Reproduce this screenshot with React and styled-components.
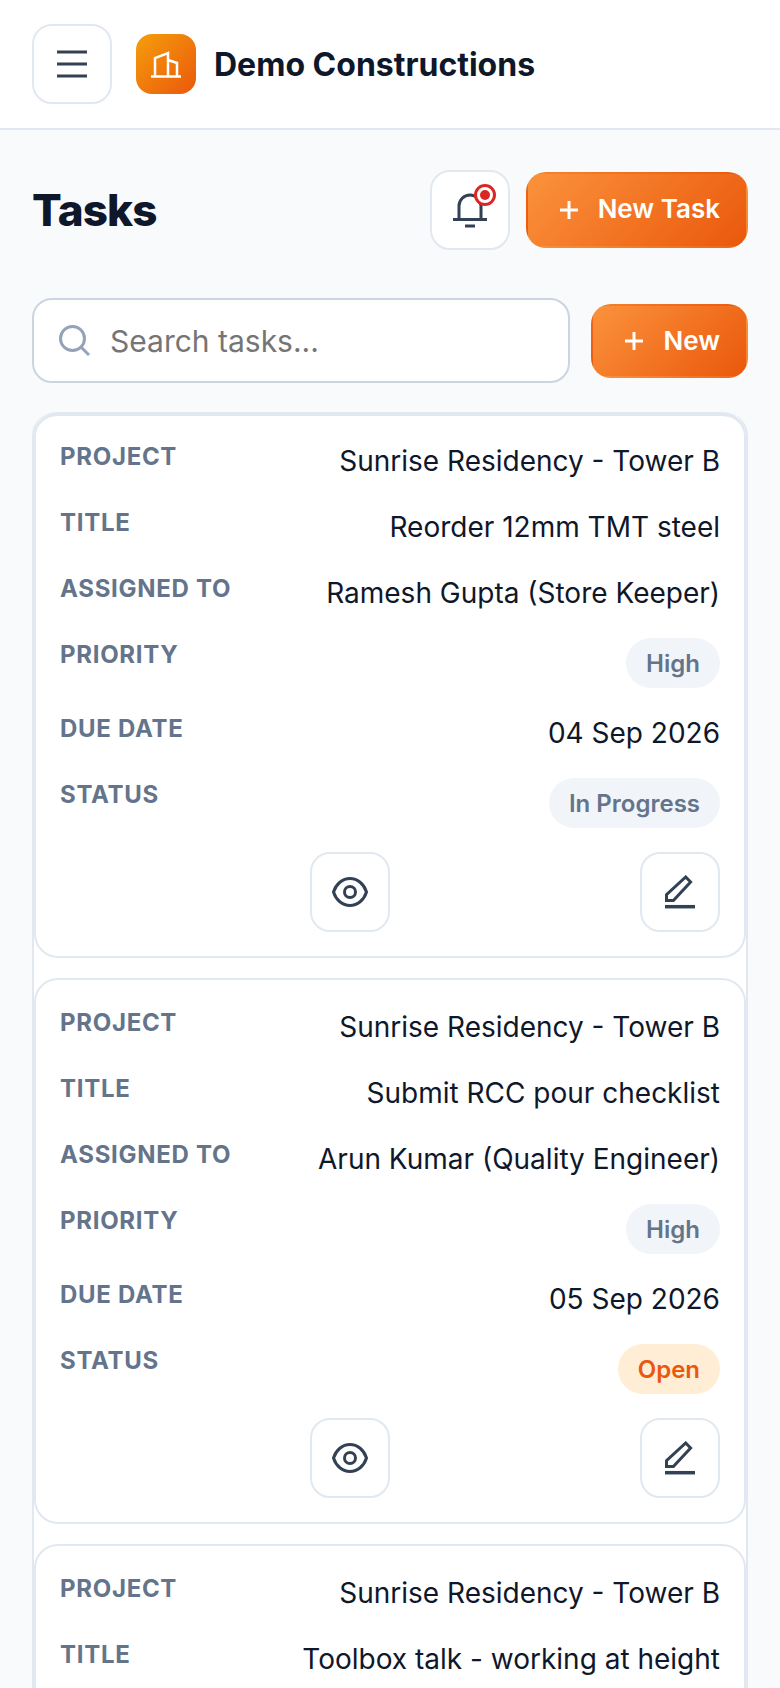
import React from 'react';
import styled, { createGlobalStyle } from 'styled-components';

const GlobalStyle = createGlobalStyle`
  html, body {
    margin: 0;
    height: 1688px;
    overflow: hidden;
    background: #f8fafc;
    font-family: Inter, "Liberation Sans", sans-serif;
    color: #0f172a;
  }
  * { box-sizing: border-box; }
`;

const Header = styled.header`
  display: flex;
  align-items: center;
  height: 130px;
  padding: 0 32px;
  background: #fff;
  border-bottom: 2px solid #e2e8f0;
`;

const MenuButton = styled.button`
  display: flex;
  align-items: center;
  justify-content: center;
  flex: none;
  width: 80px;
  height: 80px;
  padding: 0;
  background: #fff;
  border: 2px solid #e2e8f0;
  border-radius: 20px;
`;

const Logo = styled.div`
  display: flex;
  align-items: center;
  justify-content: center;
  flex: none;
  width: 60px;
  height: 60px;
  margin-left: 24px;
  border-radius: 16px;
  background: linear-gradient(135deg, #f59e0b, #ea580c);
`;

const Brand = styled.div`
  margin-left: 18px;
  font-size: 32px;
  font-weight: 700;
`;

const Main = styled.main`
  padding: 40px 32px 0;
`;

const TitleRow = styled.div`
  display: flex;
  align-items: center;
  justify-content: space-between;
  height: 80px;
`;

const Title = styled.h1`
  margin: 0;
  font-size: 44px;
  font-weight: 800;
  letter-spacing: -0.88px;
`;

const TitleActions = styled.div`
  display: flex;
  align-items: center;
  gap: 16px;
`;

const IconButton = styled.button`
  position: relative;
  display: flex;
  align-items: center;
  justify-content: center;
  flex: none;
  width: 80px;
  height: 80px;
  padding: 0;
  background: #fff;
  border: 2px solid #e2e8f0;
  border-radius: 20px;
`;

const Badge = styled.span`
  position: absolute;
  top: 12px;
  left: 42px;
  display: flex;
  align-items: center;
  justify-content: center;
  width: 22px;
  height: 22px;
  background: #fff;
  border: 3px solid #dc2626;
  border-radius: 50%;

  &::after {
    content: '';
    width: 10px;
    height: 10px;
    background: #dc2626;
    border-radius: 50%;
  }
`;

// transparent border: the gradient repeats under it, dark on the left, light on the right
const PrimaryButton = styled.button`
  display: flex;
  align-items: center;
  flex: none;
  gap: 20px;
  height: ${(p) => p.$height}px;
  padding: 0 26px 0 32px;
  color: #fff;
  font-family: inherit;
  font-size: 26px;
  font-weight: 600;
  background: linear-gradient(135deg, #fb923c, #ea580c);
  border: 2px solid transparent;
  border-radius: 20px;
`;

const ButtonText = styled.span`
  margin-bottom: ${(p) => (p.$raised ? '3px' : '0')};
`;

const SearchRow = styled.div`
  display: flex;
  align-items: center;
  gap: 21px;
  margin-top: 48px;
`;

const SearchBox = styled.label`
  display: flex;
  flex: 1;
  align-items: center;
  gap: 20px;
  min-width: 0;
  height: 85px;
  padding: 0 24px 0 25px;
  background: #fff;
  border: 2px solid #cbd5e1;
  border-radius: 20px;
`;

const SearchInput = styled.input`
  flex: 1;
  min-width: 0;
  padding: 0;
  border: 0;
  outline: 0;
  font-family: inherit;
  font-size: 30px;
  color: #0f172a;
  background: transparent;
`;

const List = styled.div`
  display: flex;
  flex-direction: column;
  gap: 20px;
  margin-top: 29px;
  background: #fff;
  border: 2px solid #e2e8f0;
  border-top: 0;
  border-radius: 24px;
`;

const Card = styled.article`
  display: flex;
  flex-direction: column;
  gap: 24px;
  min-height: 546px;
  padding: 26px 24px 24px;
  background: #fff;
  border: 2px solid #e2e8f0;
  border-radius: 24px;

  &:first-child {
    padding-top: 24px;
    border-top-width: 4px;
  }
`;

const Row = styled.div`
  display: flex;
  align-items: flex-start;
  justify-content: space-between;
  min-height: 42px;
`;

const Label = styled.span`
  font-size: 24px;
  font-weight: 700;
  line-height: 34px;
  letter-spacing: 0.7px;
  color: #64748b;
`;

const Value = styled.span`
  font-size: 28px;
  line-height: 42px;
`;

const Pill = styled.span`
  height: 50px;
  padding: 0 20px;
  border-radius: 25px;
  font-size: 24px;
  font-weight: 600;
  line-height: 52px;
  color: ${(p) => (p.$open ? '#ea580c' : '#64748b')};
  background: ${(p) => (p.$open ? '#ffedd5' : '#f1f5f9')};
`;

const Actions = styled.div`
  display: flex;
  justify-content: flex-end;
  gap: 250px;
`;

const MenuIcon = () => (
  <svg width="30" height="28" viewBox="0 0 30 28" fill="none" stroke="#334155" strokeWidth="3">
    <path d="M0 2h30M0 14h30M0 26h30" />
  </svg>
);

const BuildingIcon = () => (
  <svg width="30" height="28" viewBox="0 0 30 28" fill="none" stroke="#fff" strokeWidth="2.500">
    <path d="M0 26.500h30M4 26.500V8L17 3v23.500M17 10l9 3v13.500" />
  </svg>
);

const BellIcon = () => (
  <svg width="34" height="36" viewBox="0 0 34 36" fill="none" stroke="#334155" strokeWidth="3">
    <path d="M6 27V14a11 11 0 0 1 22 0v13M0 27.500h34M12 34h10" />
  </svg>
);

const PlusIcon = () => (
  <svg width="18" height="18" viewBox="0 0 18 18" stroke="#fff" strokeWidth="3">
    <path d="M0 9h18M9 0v18" />
  </svg>
);

const SearchIcon = () => (
  <svg width="31" height="31" viewBox="0 0 31 31" fill="none" stroke="#94a3b8" strokeWidth="3">
    <circle cx="13.500" cy="13.500" r="12" />
    <path d="M22 22l8 8" />
  </svg>
);

const EyeIcon = () => (
  <svg width="36" height="30" viewBox="0 0 36 30" fill="none" stroke="#334155" strokeWidth="3">
    <path d="M1.500 15C4 7 10.500 1.500 18 1.500S32 7 34.500 15C32 23 25.500 28.500 18 28.500S4 23 1.500 15Z" />
    <circle cx="18" cy="15" r="5.500" />
  </svg>
);

const PencilIcon = () => (
  <svg width="30" height="34" viewBox="0 0 30 34" fill="none" stroke="#334155" strokeWidth="3">
    <path d="M1.500 25.500v-5.800L20.700 2l4.900 5-17.200 18.500Z" />
    <path d="M0 31.700h30" strokeWidth="3.500" />
  </svg>
);

const tasks = [
  {
    project: 'Sunrise Residency - Tower B',
    title: 'Reorder 12mm TMT steel',
    assigned: 'Ramesh Gupta (Store Keeper)',
    priority: 'High',
    due: '04 Sep 2026',
    status: 'In Progress',
  },
  {
    project: 'Sunrise Residency - Tower B',
    title: 'Submit RCC pour checklist',
    assigned: 'Arun Kumar (Quality Engineer)',
    priority: 'High',
    due: '05 Sep 2026',
    status: 'Open',
  },
  {
    project: 'Sunrise Residency - Tower B',
    title: 'Toolbox talk - working at height',
  },
];

function TaskCard({ task }) {
  return (
    <Card>
      <Row>
        <Label>PROJECT</Label>
        <Value>{task.project}</Value>
      </Row>
      <Row>
        <Label>TITLE</Label>
        <Value>{task.title}</Value>
      </Row>
      {task.assigned && (
        <>
          <Row>
            <Label>ASSIGNED TO</Label>
            <Value>{task.assigned}</Value>
          </Row>
          <Row>
            <Label>PRIORITY</Label>
            <Pill>{task.priority}</Pill>
          </Row>
          <Row>
            <Label>DUE DATE</Label>
            <Value>{task.due}</Value>
          </Row>
          <Row>
            <Label>STATUS</Label>
            <Pill $open={task.status === 'Open'}>{task.status}</Pill>
          </Row>
          <Actions>
            <IconButton><EyeIcon /></IconButton>
            <IconButton><PencilIcon /></IconButton>
          </Actions>
        </>
      )}
    </Card>
  );
}

export default function App() {
  return (
    <>
      <GlobalStyle />
      <Header>
        <MenuButton><MenuIcon /></MenuButton>
        <Logo><BuildingIcon /></Logo>
        <Brand>Demo Constructions</Brand>
      </Header>
      <Main>
        <TitleRow>
          <Title>Tasks</Title>
          <TitleActions>
            <IconButton><BellIcon /><Badge /></IconButton>
            <PrimaryButton $height={76}><PlusIcon /><ButtonText $raised>New Task</ButtonText></PrimaryButton>
          </TitleActions>
        </TitleRow>
        <SearchRow>
          <SearchBox>
            <SearchIcon />
            <SearchInput placeholder="Search tasks..." />
          </SearchBox>
          <PrimaryButton $height={74}><PlusIcon /><ButtonText>New</ButtonText></PrimaryButton>
        </SearchRow>
        <List>
          {tasks.map((task) => (
            <TaskCard key={task.title} task={task} />
          ))}
        </List>
      </Main>
    </>
  );
}
